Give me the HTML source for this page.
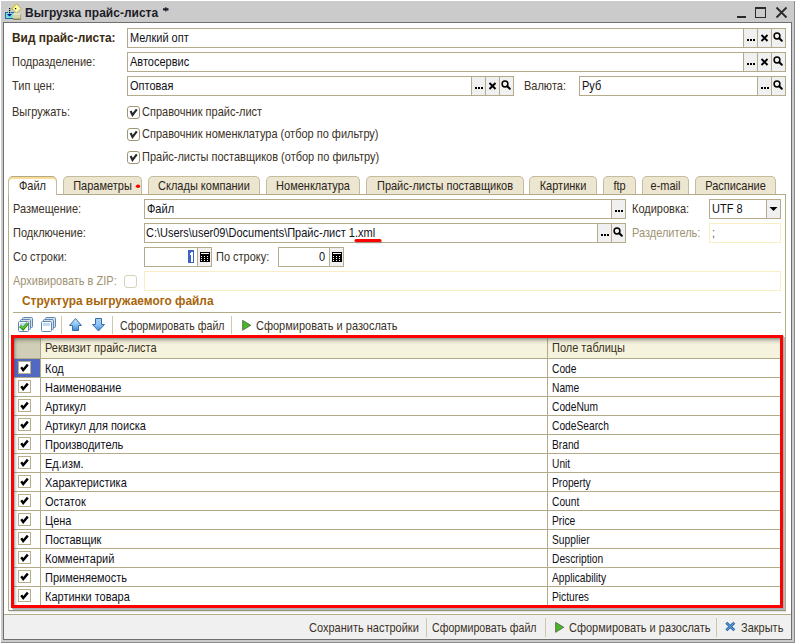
<!DOCTYPE html><html><head><meta charset="utf-8"><style>
html,body{margin:0;padding:0;background:#fff;width:795px;height:643px;overflow:hidden;position:relative}
.a{position:absolute;box-sizing:border-box}
.t{position:absolute;font-family:"Liberation Sans",sans-serif;line-height:14px;white-space:pre}
</style></head><body>
<div class="a" style="left:1px;top:1px;width:793px;height:641px;background:#cbcbcb;"></div>
<div class="a" style="left:794px;top:1px;width:1px;height:642px;background:#8c8c8c;"></div>
<div class="a" style="left:1px;top:642px;width:794px;height:1px;background:#8c8c8c;"></div>
<div class="a" style="left:3px;top:22px;width:789px;height:618px;background:#fff;border:1px solid #6e6e6e;box-sizing:border-box;"></div>
<div class="t" style="left:25px;top:6px;color:#1c1c28;font-size:12px;font-weight:bold;transform:scale(1,1.12);transform-origin:0 10px;">Выгрузка прайс-листа</div>
<svg class="a" style="left:162px;top:6px" width="8" height="7"><path d="M3.8,1.2L3.8,5.4M1.2,2.6L6.4,4M6.4,2.6L1.2,4" stroke="#1c1c28" stroke-width="1.3"/></svg>
<div class="a" style="left:737px;top:16px;width:9px;height:2px;background:#2a2a2a;"></div>
<div class="a" style="left:755px;top:7px;width:11px;height:11px;border:1px solid #2a2a2a;box-sizing:border-box;border-top-width:2px;"></div>
<svg class="a" style="left:774px;top:5px" width="15" height="15"><path d="M2.5,2.5L12.5,12.5M12.5,2.5L2.5,12.5" stroke="#2a2a2a" stroke-width="1.8"/></svg>
<svg class="a" style="left:0px;top:0px" width="24" height="22">
<rect x="5.5" y="12.5" width="8" height="6" fill="#78dcd8" stroke="#2a64a8" stroke-width="1"/>
<rect x="8" y="12" width="3" height="1.2" fill="#78dcd8"/>
<path d="M7,14L12,14L9.5,16.6Z" fill="#00108a"/>
<rect x="9" y="8" width="1.2" height="1.2" fill="#000"/><rect x="9" y="10" width="1.2" height="1.2" fill="#000"/><rect x="9" y="12" width="1.2" height="1.2" fill="#000"/><rect x="12" y="8" width="1.2" height="1.2" fill="#000"/>
<path d="M16.5,3.8L21,8.5L16.5,13.2L12,8.5Z" fill="#ffffa8" stroke="#9a9a40" stroke-width="0.8"/>
<path d="M12,8.5L16.5,3.8" stroke="#d8d000" stroke-width="1"/>
<rect x="15" y="8" width="1.2" height="1.2" fill="#000"/>
<rect x="13" y="13.5" width="8" height="6" fill="#d8d4a8"/>
<rect x="13" y="13.5" width="8" height="1" fill="#f4f2d0"/>
<rect x="13" y="18.6" width="8" height="1.2" fill="#7c7440"/>
<rect x="20.2" y="14" width="0.9" height="5.6" fill="#a8a070"/>
</svg>
<div class="t" style="left:12px;top:31px;color:#3a2a10;font-size:11.9px;font-weight:bold;transform:scale(1,1.06);transform-origin:0 10px;">Вид прайс-листа:</div>
<div class="a" style="left:127px;top:28px;width:659px;height:20px;background:#fff;border:1px solid #b3ab8b;box-sizing:border-box;"></div>
<div class="a" style="left:743px;top:28px;width:1px;height:20px;background:#b3ab8b;"></div>
<div class="a" style="left:744px;top:29px;width:13px;height:18px;background:#f0f0f0;"></div>
<div class="a" style="left:747px;top:39px;width:2px;height:2px;background:#000;"></div>
<div class="a" style="left:750px;top:39px;width:2px;height:2px;background:#000;"></div>
<div class="a" style="left:753px;top:39px;width:2px;height:2px;background:#000;"></div>
<div class="a" style="left:757px;top:28px;width:1px;height:20px;background:#b3ab8b;"></div>
<div class="a" style="left:758px;top:29px;width:13px;height:18px;background:#f0f0f0;"></div>
<svg class="a" style="left:758px;top:29px" width="13" height="18"><path d="M3.5,6.0L9.5,12.0M9.5,6.0L3.5,12.0" stroke="#000" stroke-width="1.9"/></svg>
<div class="a" style="left:771px;top:28px;width:1px;height:20px;background:#b3ab8b;"></div>
<div class="a" style="left:772px;top:29px;width:13px;height:18px;background:#f0f0f0;"></div>
<svg class="a" style="left:772px;top:29px" width="13" height="18"><circle cx="5.0" cy="7.0" r="2.9" fill="none" stroke="#000" stroke-width="1.5"/><path d="M7.3,9.3L9.8,11.8" stroke="#000" stroke-width="2" stroke-linecap="round"/></svg>
<div class="t" style="left:130px;top:31px;color:#101018;font-size:11px;font-weight:normal;transform:scale(1,1.12);transform-origin:0 10px;">Мелкий опт</div>
<div class="t" style="left:12px;top:55px;color:#3a3226;font-size:11px;font-weight:normal;transform:scale(1,1.12);transform-origin:0 10px;">Подразделение:</div>
<div class="a" style="left:127px;top:52px;width:659px;height:20px;background:#fff;border:1px solid #b3ab8b;box-sizing:border-box;"></div>
<div class="a" style="left:743px;top:52px;width:1px;height:20px;background:#b3ab8b;"></div>
<div class="a" style="left:744px;top:53px;width:13px;height:18px;background:#f0f0f0;"></div>
<div class="a" style="left:747px;top:63px;width:2px;height:2px;background:#000;"></div>
<div class="a" style="left:750px;top:63px;width:2px;height:2px;background:#000;"></div>
<div class="a" style="left:753px;top:63px;width:2px;height:2px;background:#000;"></div>
<div class="a" style="left:757px;top:52px;width:1px;height:20px;background:#b3ab8b;"></div>
<div class="a" style="left:758px;top:53px;width:13px;height:18px;background:#f0f0f0;"></div>
<svg class="a" style="left:758px;top:53px" width="13" height="18"><path d="M3.5,6.0L9.5,12.0M9.5,6.0L3.5,12.0" stroke="#000" stroke-width="1.9"/></svg>
<div class="a" style="left:771px;top:52px;width:1px;height:20px;background:#b3ab8b;"></div>
<div class="a" style="left:772px;top:53px;width:13px;height:18px;background:#f0f0f0;"></div>
<svg class="a" style="left:772px;top:53px" width="13" height="18"><circle cx="5.0" cy="7.0" r="2.9" fill="none" stroke="#000" stroke-width="1.5"/><path d="M7.3,9.3L9.8,11.8" stroke="#000" stroke-width="2" stroke-linecap="round"/></svg>
<div class="t" style="left:130px;top:55px;color:#101018;font-size:11px;font-weight:normal;transform:scale(1,1.12);transform-origin:0 10px;">Автосервис</div>
<div class="t" style="left:12px;top:79px;color:#3a3226;font-size:11px;font-weight:normal;transform:scale(1,1.12);transform-origin:0 10px;">Тип цен:</div>
<div class="a" style="left:127px;top:76px;width:387px;height:20px;background:#fff;border:1px solid #b3ab8b;box-sizing:border-box;"></div>
<div class="a" style="left:471px;top:76px;width:1px;height:20px;background:#b3ab8b;"></div>
<div class="a" style="left:472px;top:77px;width:13px;height:18px;background:#f0f0f0;"></div>
<div class="a" style="left:475px;top:87px;width:2px;height:2px;background:#000;"></div>
<div class="a" style="left:478px;top:87px;width:2px;height:2px;background:#000;"></div>
<div class="a" style="left:481px;top:87px;width:2px;height:2px;background:#000;"></div>
<div class="a" style="left:485px;top:76px;width:1px;height:20px;background:#b3ab8b;"></div>
<div class="a" style="left:486px;top:77px;width:13px;height:18px;background:#f0f0f0;"></div>
<svg class="a" style="left:486px;top:77px" width="13" height="18"><path d="M3.5,6.0L9.5,12.0M9.5,6.0L3.5,12.0" stroke="#000" stroke-width="1.9"/></svg>
<div class="a" style="left:499px;top:76px;width:1px;height:20px;background:#b3ab8b;"></div>
<div class="a" style="left:500px;top:77px;width:13px;height:18px;background:#f0f0f0;"></div>
<svg class="a" style="left:500px;top:77px" width="13" height="18"><circle cx="5.0" cy="7.0" r="2.9" fill="none" stroke="#000" stroke-width="1.5"/><path d="M7.3,9.3L9.8,11.8" stroke="#000" stroke-width="2" stroke-linecap="round"/></svg>
<div class="t" style="left:130px;top:79px;color:#101018;font-size:11px;font-weight:normal;transform:scale(1,1.12);transform-origin:0 10px;">Оптовая</div>
<div class="t" style="left:524px;top:79px;color:#3a3226;font-size:11px;font-weight:normal;transform:scale(1,1.12);transform-origin:0 10px;">Валюта:</div>
<div class="a" style="left:579px;top:76px;width:207px;height:20px;background:#fff;border:1px solid #b3ab8b;box-sizing:border-box;"></div>
<div class="a" style="left:757px;top:76px;width:1px;height:20px;background:#b3ab8b;"></div>
<div class="a" style="left:758px;top:77px;width:13px;height:18px;background:#f0f0f0;"></div>
<div class="a" style="left:761px;top:87px;width:2px;height:2px;background:#000;"></div>
<div class="a" style="left:764px;top:87px;width:2px;height:2px;background:#000;"></div>
<div class="a" style="left:767px;top:87px;width:2px;height:2px;background:#000;"></div>
<div class="a" style="left:771px;top:76px;width:1px;height:20px;background:#b3ab8b;"></div>
<div class="a" style="left:772px;top:77px;width:13px;height:18px;background:#f0f0f0;"></div>
<svg class="a" style="left:772px;top:77px" width="13" height="18"><circle cx="5.0" cy="7.0" r="2.9" fill="none" stroke="#000" stroke-width="1.5"/><path d="M7.3,9.3L9.8,11.8" stroke="#000" stroke-width="2" stroke-linecap="round"/></svg>
<div class="t" style="left:582px;top:79px;color:#101018;font-size:11px;font-weight:normal;transform:scale(1,1.12);transform-origin:0 10px;">Руб</div>
<div class="t" style="left:12px;top:105px;color:#3a3226;font-size:11px;font-weight:normal;transform:scale(1,1.12);transform-origin:0 10px;">Выгружать:</div>
<div class="a" style="left:127px;top:106px;width:13px;height:13px;background:#fff;border:1px solid #9f9775;box-sizing:border-box;border-radius:3px;"></div>
<svg class="a" style="left:127px;top:106px" width="13" height="13"><path d="M3.6,5L5.5,9L9.8,3.3" fill="none" stroke="#262626" stroke-width="2.1" stroke-linejoin="miter"/></svg>
<div class="t" style="left:142px;top:105px;color:#3a3226;font-size:11px;font-weight:normal;transform:scale(1,1.12);transform-origin:0 10px;">Справочник прайс-лист</div>
<div class="a" style="left:127px;top:128px;width:13px;height:13px;background:#fff;border:1px solid #9f9775;box-sizing:border-box;border-radius:3px;"></div>
<svg class="a" style="left:127px;top:128px" width="13" height="13"><path d="M3.6,5L5.5,9L9.8,3.3" fill="none" stroke="#262626" stroke-width="2.1" stroke-linejoin="miter"/></svg>
<div class="t" style="left:142px;top:127px;color:#3a3226;font-size:11px;font-weight:normal;transform:scale(1,1.12);transform-origin:0 10px;">Справочник номенклатура (отбор по фильтру)</div>
<div class="a" style="left:127px;top:151px;width:13px;height:13px;background:#fff;border:1px solid #9f9775;box-sizing:border-box;border-radius:3px;"></div>
<svg class="a" style="left:127px;top:151px" width="13" height="13"><path d="M3.6,5L5.5,9L9.8,3.3" fill="none" stroke="#262626" stroke-width="2.1" stroke-linejoin="miter"/></svg>
<div class="t" style="left:142px;top:150px;color:#3a3226;font-size:11px;font-weight:normal;transform:scale(1,1.12);transform-origin:0 10px;">Прайс-листы поставщиков (отбор по фильтру)</div>
<div class="a" style="left:8px;top:194px;width:778px;height:417px;background:#fff;border:1px solid #b3aa88;box-sizing:border-box;"></div>
<div class="a" style="left:8px;top:176px;width:49px;height:19px;background:#fff;border:1px solid #c4bc9c;border-bottom:none;border-radius:5px 5px 0 0;border-top-color:#b3a980;box-shadow:inset 0 2px 0 #fbdb98;"></div>
<div class="t" style="left:8px;top:179px;width:49px;text-align:center;color:#2a2418;font-size:11px;transform:scaleY(1.12);transform-origin:0 10px">Файл</div>
<div class="a" style="left:63px;top:176px;width:79px;height:18px;background:#ece6d1;border:1px solid #c4bc9c;border-bottom:none;border-radius:5px 5px 0 0;"></div>
<div class="t" style="left:63px;top:179px;width:79px;text-align:center;color:#2a2418;font-size:11px;transform:scaleY(1.12);transform-origin:0 10px">Параметры</div>
<div class="a" style="left:148px;top:176px;width:112px;height:18px;background:#ece6d1;border:1px solid #c4bc9c;border-bottom:none;border-radius:5px 5px 0 0;"></div>
<div class="t" style="left:148px;top:179px;width:112px;text-align:center;color:#2a2418;font-size:11px;transform:scaleY(1.12);transform-origin:0 10px">Склады компании</div>
<div class="a" style="left:266px;top:176px;width:94px;height:18px;background:#ece6d1;border:1px solid #c4bc9c;border-bottom:none;border-radius:5px 5px 0 0;"></div>
<div class="t" style="left:266px;top:179px;width:94px;text-align:center;color:#2a2418;font-size:11px;transform:scaleY(1.12);transform-origin:0 10px">Номенклатура</div>
<div class="a" style="left:366px;top:176px;width:158px;height:18px;background:#ece6d1;border:1px solid #c4bc9c;border-bottom:none;border-radius:5px 5px 0 0;"></div>
<div class="t" style="left:366px;top:179px;width:158px;text-align:center;color:#2a2418;font-size:11px;transform:scaleY(1.12);transform-origin:0 10px">Прайс-листы поставщиков</div>
<div class="a" style="left:529px;top:176px;width:68px;height:18px;background:#ece6d1;border:1px solid #c4bc9c;border-bottom:none;border-radius:5px 5px 0 0;"></div>
<div class="t" style="left:529px;top:179px;width:68px;text-align:center;color:#2a2418;font-size:11px;transform:scaleY(1.12);transform-origin:0 10px">Картинки</div>
<div class="a" style="left:603px;top:176px;width:33px;height:18px;background:#ece6d1;border:1px solid #c4bc9c;border-bottom:none;border-radius:5px 5px 0 0;"></div>
<div class="t" style="left:603px;top:179px;width:33px;text-align:center;color:#2a2418;font-size:11px;transform:scaleY(1.12);transform-origin:0 10px">ftp</div>
<div class="a" style="left:642px;top:176px;width:47px;height:18px;background:#ece6d1;border:1px solid #c4bc9c;border-bottom:none;border-radius:5px 5px 0 0;"></div>
<div class="t" style="left:642px;top:179px;width:47px;text-align:center;color:#2a2418;font-size:11px;transform:scaleY(1.12);transform-origin:0 10px">e-mail</div>
<div class="a" style="left:695px;top:176px;width:81px;height:18px;background:#ece6d1;border:1px solid #c4bc9c;border-bottom:none;border-radius:5px 5px 0 0;"></div>
<div class="t" style="left:695px;top:179px;width:81px;text-align:center;color:#2a2418;font-size:11px;transform:scaleY(1.12);transform-origin:0 10px">Расписание</div>
<svg class="a" style="left:134px;top:183px" width="8" height="7"><ellipse cx="4" cy="3.3" rx="2.2" ry="1.8" fill="#f00"/></svg>
<div class="t" style="left:13px;top:202px;color:#3a3226;font-size:11px;font-weight:normal;transform:scale(1,1.12);transform-origin:0 10px;">Размещение:</div>
<div class="a" style="left:144px;top:199px;width:482px;height:20px;background:#fff;border:1px solid #b3ab8b;box-sizing:border-box;"></div>
<div class="a" style="left:611px;top:199px;width:1px;height:20px;background:#b3ab8b;"></div>
<div class="a" style="left:612px;top:200px;width:13px;height:18px;background:#f0f0f0;"></div>
<div class="a" style="left:615px;top:210px;width:2px;height:2px;background:#000;"></div>
<div class="a" style="left:618px;top:210px;width:2px;height:2px;background:#000;"></div>
<div class="a" style="left:621px;top:210px;width:2px;height:2px;background:#000;"></div>
<div class="t" style="left:147px;top:202px;color:#101018;font-size:11px;font-weight:normal;transform:scale(1,1.12);transform-origin:0 10px;">Файл</div>
<div class="t" style="left:632px;top:202px;color:#3a3226;font-size:11px;font-weight:normal;transform:scale(1,1.12);transform-origin:0 10px;">Кодировка:</div>
<div class="a" style="left:709px;top:199px;width:72px;height:20px;background:#fff;border:1px solid #b3ab8b;box-sizing:border-box;"></div>
<div class="a" style="left:766px;top:199px;width:1px;height:20px;background:#b3ab8b;"></div>
<div class="a" style="left:767px;top:200px;width:13px;height:18px;background:#f0f0f0;"></div>
<svg class="a" style="left:767px;top:200px" width="13" height="18"><path d="M2.5,7.0L10.5,7.0L6.5,11.0Z" fill="#000"/></svg>
<div class="t" style="left:712px;top:202px;color:#101018;font-size:11px;font-weight:normal;transform:scale(1,1.12);transform-origin:0 10px;">UTF 8</div>
<div class="t" style="left:13px;top:226px;color:#3a3226;font-size:11px;font-weight:normal;transform:scale(1,1.12);transform-origin:0 10px;">Подключение:</div>
<div class="a" style="left:144px;top:223px;width:482px;height:20px;background:#fff;border:1px solid #b3ab8b;box-sizing:border-box;"></div>
<div class="a" style="left:597px;top:223px;width:1px;height:20px;background:#b3ab8b;"></div>
<div class="a" style="left:598px;top:224px;width:13px;height:18px;background:#f0f0f0;"></div>
<div class="a" style="left:601px;top:234px;width:2px;height:2px;background:#000;"></div>
<div class="a" style="left:604px;top:234px;width:2px;height:2px;background:#000;"></div>
<div class="a" style="left:607px;top:234px;width:2px;height:2px;background:#000;"></div>
<div class="a" style="left:611px;top:223px;width:1px;height:20px;background:#b3ab8b;"></div>
<div class="a" style="left:612px;top:224px;width:13px;height:18px;background:#f0f0f0;"></div>
<svg class="a" style="left:612px;top:224px" width="13" height="18"><circle cx="5.0" cy="7.0" r="2.9" fill="none" stroke="#000" stroke-width="1.5"/><path d="M7.3,9.3L9.8,11.8" stroke="#000" stroke-width="2" stroke-linecap="round"/></svg>
<div class="t" style="left:146px;top:226px;color:#101018;font-size:11px;font-weight:normal;transform:scale(1,1.12);transform-origin:0 10px;">C:\Users\user09\Documents\Прайс-лист 1.xml</div>
<div class="t" style="left:632px;top:226px;color:#9e9272;font-size:11px;font-weight:normal;transform:scale(1,1.12);transform-origin:0 10px;">Разделитель:</div>
<div class="a" style="left:709px;top:223px;width:72px;height:20px;background:#fff;border:1px solid #f8efc4;box-sizing:border-box;"></div>
<div class="t" style="left:712px;top:226px;color:#555;font-size:11px;font-weight:normal;transform:scale(1,1.12);transform-origin:0 10px;">;</div>
<svg class="a" style="left:353px;top:237px" width="30" height="7"><path d="M4,5L28,5" stroke="rgba(0,0,0,0.13)" stroke-width="3" stroke-linecap="round"/><path d="M3,3.5L27,3.5" stroke="#f00" stroke-width="3" stroke-linecap="round"/></svg>
<div class="t" style="left:13px;top:250px;color:#3a3226;font-size:11px;font-weight:normal;transform:scale(1,1.12);transform-origin:0 10px;">Со строки:</div>
<div class="a" style="left:144px;top:247px;width:68px;height:20px;background:#fff;border:1px solid #b3ab8b;box-sizing:border-box;"></div>
<div class="a" style="left:197px;top:247px;width:1px;height:20px;background:#b3ab8b;"></div>
<div class="a" style="left:198px;top:248px;width:13px;height:18px;background:#f0f0f0;"></div>
<svg class="a" style="left:198px;top:248px" width="13" height="18"><rect x="2" y="4" width="10" height="10" fill="#000"/><rect x="3" y="5" width="8" height="1" fill="#fff"/><rect x="3" y="8" width="1" height="1" fill="#fff"/><rect x="3" y="10" width="1" height="1" fill="#fff"/><rect x="3" y="12" width="1" height="1" fill="#fff"/><rect x="6" y="8" width="1" height="1" fill="#fff"/><rect x="6" y="10" width="1" height="1" fill="#fff"/><rect x="6" y="12" width="1" height="1" fill="#fff"/><rect x="9" y="8" width="1" height="1" fill="#fff"/><rect x="9" y="10" width="1" height="1" fill="#fff"/><rect x="9" y="12" width="1" height="1" fill="#fff"/></svg>
<div class="a" style="left:188px;top:250px;width:6px;height:13px;background:#3d62c8;"></div>
<div class="a" style="left:191px;top:252px;width:1.6px;height:10px;background:#fff;"></div>
<div class="a" style="left:189.6px;top:253px;width:1.6px;height:1.6px;background:#fff;"></div>
<div class="t" style="left:216px;top:250px;color:#3a3226;font-size:11px;font-weight:normal;transform:scale(1,1.12);transform-origin:0 10px;">По строку:</div>
<div class="a" style="left:278px;top:247px;width:66px;height:20px;background:#fff;border:1px solid #b3ab8b;box-sizing:border-box;"></div>
<div class="a" style="left:329px;top:247px;width:1px;height:20px;background:#b3ab8b;"></div>
<div class="a" style="left:330px;top:248px;width:13px;height:18px;background:#f0f0f0;"></div>
<svg class="a" style="left:330px;top:248px" width="13" height="18"><rect x="2" y="4" width="10" height="10" fill="#000"/><rect x="3" y="5" width="8" height="1" fill="#fff"/><rect x="3" y="8" width="1" height="1" fill="#fff"/><rect x="3" y="10" width="1" height="1" fill="#fff"/><rect x="3" y="12" width="1" height="1" fill="#fff"/><rect x="6" y="8" width="1" height="1" fill="#fff"/><rect x="6" y="10" width="1" height="1" fill="#fff"/><rect x="6" y="12" width="1" height="1" fill="#fff"/><rect x="9" y="8" width="1" height="1" fill="#fff"/><rect x="9" y="10" width="1" height="1" fill="#fff"/><rect x="9" y="12" width="1" height="1" fill="#fff"/></svg>
<div class="t" style="left:319px;top:250px;color:#101018;font-size:11px;font-weight:normal;transform:scale(1,1.12);transform-origin:0 10px;">0</div>
<div class="t" style="left:13px;top:274px;color:#9e9272;font-size:11px;font-weight:normal;transform:scale(1,1.12);transform-origin:0 10px;">Архивировать в ZIP:</div>
<div class="a" style="left:124px;top:275px;width:13px;height:13px;background:#fff;border:1px solid #d8d2bc;box-sizing:border-box;border-radius:3px;"></div>
<div class="a" style="left:144px;top:271px;width:637px;height:20px;background:#fff;border:1px solid #f8efc4;box-sizing:border-box;"></div>
<div class="t" style="left:22px;top:294px;color:#a86408;font-size:11.9px;font-weight:bold;">Структура выгружаемого файла</div>
<div class="a" style="left:13px;top:312px;width:768px;height:1px;background:#b3aa88;"></div>
<div class="a" style="left:61px;top:316px;width:1px;height:18px;background:#cfc8a8;"></div>
<div class="a" style="left:112px;top:316px;width:1px;height:18px;background:#cfc8a8;"></div>
<div class="a" style="left:231px;top:316px;width:1px;height:18px;background:#cfc8a8;"></div>
<div class="t" style="left:120px;top:319px;color:#3a3226;font-size:11px;font-weight:normal;transform:scale(0.965,1.12);transform-origin:0 10px;">Сформировать файл</div>
<svg class="a" style="left:240px;top:318px" width="14" height="14"><path d="M2.6,2.3L10.8,7.3L2.6,12.3Z" fill="#4cb42a" stroke="#3c5a34" stroke-width="0.7" stroke-linejoin="round"/></svg>
<div class="t" style="left:256px;top:319px;color:#3a3226;font-size:11px;font-weight:normal;transform:scale(1,1.12);transform-origin:0 10px;">Сформировать и разослать</div>
<svg class="a" style="left:17px;top:316px" width="18" height="18"><rect x="5.5" y="1.5" width="10" height="10" rx="1" fill="#dcdfe4" stroke="#5a88b8" stroke-width="1"/><rect x="3.5" y="3.5" width="10" height="10" rx="1" fill="#dcdfe4" stroke="#5a88b8" stroke-width="1"/><rect x="1.5" y="5.5" width="10" height="10" rx="1" fill="#fff" stroke="#5a88b8" stroke-width="1"/><rect x="3" y="7" width="7" height="3" fill="#c0d8f0"/><path d="M3,10L6,12.8L10.8,7.2" fill="none" stroke="#2a8a18" stroke-width="3"/><path d="M3.4,10L6,12.2L10.5,7.3" fill="none" stroke="#5cc83a" stroke-width="1.6"/></svg>
<svg class="a" style="left:40px;top:316px" width="18" height="18"><rect x="5.5" y="1.5" width="10" height="10" rx="1" fill="#dcdfe4" stroke="#5a88b8" stroke-width="1"/><rect x="3.5" y="3.5" width="10" height="10" rx="1" fill="#dcdfe4" stroke="#5a88b8" stroke-width="1"/><rect x="1.5" y="5.5" width="10" height="10" rx="1" fill="#fff" stroke="#5a88b8" stroke-width="1"/><rect x="3" y="7" width="7" height="3" fill="#c0d8f0"/></svg>
<svg class="a" style="left:68px;top:317px" width="16" height="16"><defs><linearGradient id="gu" x1="0" y1="0" x2="0" y2="1"><stop offset="0" stop-color="#d8ecfc"/><stop offset="0.5" stop-color="#8cc4f4"/><stop offset="1" stop-color="#3c88d8"/></linearGradient></defs><path d="M7.5,1.5L13.5,8.5L10.5,8.5L10.5,13.5L4.5,13.5L4.5,8.5L1.5,8.5Z" fill="url(#gu)" stroke="#3a6ea8" stroke-width="1" stroke-linejoin="round"/></svg>
<svg class="a" style="left:91px;top:317px" width="16" height="16"><defs><linearGradient id="gd" x1="0" y1="0" x2="0" y2="1"><stop offset="0" stop-color="#a8d0f4"/><stop offset="0.5" stop-color="#8cc4f4"/><stop offset="1" stop-color="#3c88d8"/></linearGradient></defs><path d="M4.5,1.5L10.5,1.5L10.5,7.5L13.5,7.5L7.5,14L1.5,7.5L4.5,7.5Z" fill="url(#gd)" stroke="#3a6ea8" stroke-width="1" stroke-linejoin="round"/></svg>
<div class="a" style="left:11px;top:335px;width:772px;height:273px;background:#fff;border:3px solid #ff0000;box-sizing:border-box;box-shadow:1px 1px 0 #a8acac,2px 2px 0 #babcc0;"></div>
<div class="a" style="left:14px;top:338px;width:766px;height:20px;background:#f5f3de;"></div>
<div class="a" style="left:14px;top:338px;width:26px;height:20px;background:#d0ceb6;"></div>
<div class="a" style="left:14px;top:358px;width:766px;height:1px;background:#b3aa88;"></div>
<div class="a" style="left:40px;top:338px;width:1px;height:267px;background:#b3aa88;"></div>
<div class="a" style="left:547px;top:338px;width:1px;height:267px;background:#b3aa88;"></div>
<div class="t" style="left:45px;top:341px;color:#3a3020;font-size:11px;font-weight:normal;transform:scale(1,1.12);transform-origin:0 10px;">Реквизит прайс-листа</div>
<div class="t" style="left:552px;top:341px;color:#3a3020;font-size:11px;font-weight:normal;transform:scale(1,1.12);transform-origin:0 10px;">Поле таблицы</div>
<div class="a" style="left:14px;top:359px;width:26px;height:18px;background:#5269c1;"></div>
<div class="a" style="left:14px;top:377px;width:766px;height:1px;background:#b3aa88;"></div>
<div class="a" style="left:18px;top:361px;width:13px;height:13px;background:#fff;border:1px solid #b8ae88;box-sizing:border-box;"></div>
<svg class="a" style="left:18px;top:361px" width="13" height="13"><path d="M3.2,6.2L5.2,9L9.8,3.6" fill="none" stroke="#000" stroke-width="2.4"/></svg>
<div class="t" style="left:45px;top:362px;color:#101018;font-size:11px;font-weight:normal;transform:scale(1,1.12);transform-origin:0 10px;">Код</div>
<div class="t" style="left:552px;top:362px;color:#101018;font-size:11px;font-weight:normal;transform:scale(0.93,1.12);transform-origin:0 10px;">Code</div>
<div class="a" style="left:14px;top:396px;width:766px;height:1px;background:#b3aa88;"></div>
<div class="a" style="left:18px;top:380px;width:13px;height:13px;background:#fff;border:1px solid #b8ae88;box-sizing:border-box;"></div>
<svg class="a" style="left:18px;top:380px" width="13" height="13"><path d="M3.2,6.2L5.2,9L9.8,3.6" fill="none" stroke="#000" stroke-width="2.4"/></svg>
<div class="t" style="left:45px;top:381px;color:#101018;font-size:11px;font-weight:normal;transform:scale(1,1.12);transform-origin:0 10px;">Наименование</div>
<div class="t" style="left:552px;top:381px;color:#101018;font-size:11px;font-weight:normal;transform:scale(0.93,1.12);transform-origin:0 10px;">Name</div>
<div class="a" style="left:14px;top:415px;width:766px;height:1px;background:#b3aa88;"></div>
<div class="a" style="left:18px;top:399px;width:13px;height:13px;background:#fff;border:1px solid #b8ae88;box-sizing:border-box;"></div>
<svg class="a" style="left:18px;top:399px" width="13" height="13"><path d="M3.2,6.2L5.2,9L9.8,3.6" fill="none" stroke="#000" stroke-width="2.4"/></svg>
<div class="t" style="left:45px;top:400px;color:#101018;font-size:11px;font-weight:normal;transform:scale(1,1.12);transform-origin:0 10px;">Артикул</div>
<div class="t" style="left:552px;top:400px;color:#101018;font-size:11px;font-weight:normal;transform:scale(0.93,1.12);transform-origin:0 10px;">CodeNum</div>
<div class="a" style="left:14px;top:434px;width:766px;height:1px;background:#b3aa88;"></div>
<div class="a" style="left:18px;top:418px;width:13px;height:13px;background:#fff;border:1px solid #b8ae88;box-sizing:border-box;"></div>
<svg class="a" style="left:18px;top:418px" width="13" height="13"><path d="M3.2,6.2L5.2,9L9.8,3.6" fill="none" stroke="#000" stroke-width="2.4"/></svg>
<div class="t" style="left:45px;top:419px;color:#101018;font-size:11px;font-weight:normal;transform:scale(1,1.12);transform-origin:0 10px;">Артикул для поиска</div>
<div class="t" style="left:552px;top:419px;color:#101018;font-size:11px;font-weight:normal;transform:scale(0.93,1.12);transform-origin:0 10px;">CodeSearch</div>
<div class="a" style="left:14px;top:453px;width:766px;height:1px;background:#b3aa88;"></div>
<div class="a" style="left:18px;top:437px;width:13px;height:13px;background:#fff;border:1px solid #b8ae88;box-sizing:border-box;"></div>
<svg class="a" style="left:18px;top:437px" width="13" height="13"><path d="M3.2,6.2L5.2,9L9.8,3.6" fill="none" stroke="#000" stroke-width="2.4"/></svg>
<div class="t" style="left:45px;top:438px;color:#101018;font-size:11px;font-weight:normal;transform:scale(1,1.12);transform-origin:0 10px;">Производитель</div>
<div class="t" style="left:552px;top:438px;color:#101018;font-size:11px;font-weight:normal;transform:scale(0.93,1.12);transform-origin:0 10px;">Brand</div>
<div class="a" style="left:14px;top:472px;width:766px;height:1px;background:#b3aa88;"></div>
<div class="a" style="left:18px;top:456px;width:13px;height:13px;background:#fff;border:1px solid #b8ae88;box-sizing:border-box;"></div>
<svg class="a" style="left:18px;top:456px" width="13" height="13"><path d="M3.2,6.2L5.2,9L9.8,3.6" fill="none" stroke="#000" stroke-width="2.4"/></svg>
<div class="t" style="left:45px;top:457px;color:#101018;font-size:11px;font-weight:normal;transform:scale(1,1.12);transform-origin:0 10px;">Ед.изм.</div>
<div class="t" style="left:552px;top:457px;color:#101018;font-size:11px;font-weight:normal;transform:scale(0.93,1.12);transform-origin:0 10px;">Unit</div>
<div class="a" style="left:14px;top:491px;width:766px;height:1px;background:#b3aa88;"></div>
<div class="a" style="left:18px;top:475px;width:13px;height:13px;background:#fff;border:1px solid #b8ae88;box-sizing:border-box;"></div>
<svg class="a" style="left:18px;top:475px" width="13" height="13"><path d="M3.2,6.2L5.2,9L9.8,3.6" fill="none" stroke="#000" stroke-width="2.4"/></svg>
<div class="t" style="left:45px;top:476px;color:#101018;font-size:11px;font-weight:normal;transform:scale(1,1.12);transform-origin:0 10px;">Характеристика</div>
<div class="t" style="left:552px;top:476px;color:#101018;font-size:11px;font-weight:normal;transform:scale(0.93,1.12);transform-origin:0 10px;">Property</div>
<div class="a" style="left:14px;top:510px;width:766px;height:1px;background:#b3aa88;"></div>
<div class="a" style="left:18px;top:494px;width:13px;height:13px;background:#fff;border:1px solid #b8ae88;box-sizing:border-box;"></div>
<svg class="a" style="left:18px;top:494px" width="13" height="13"><path d="M3.2,6.2L5.2,9L9.8,3.6" fill="none" stroke="#000" stroke-width="2.4"/></svg>
<div class="t" style="left:45px;top:495px;color:#101018;font-size:11px;font-weight:normal;transform:scale(1,1.12);transform-origin:0 10px;">Остаток</div>
<div class="t" style="left:552px;top:495px;color:#101018;font-size:11px;font-weight:normal;transform:scale(0.93,1.12);transform-origin:0 10px;">Count</div>
<div class="a" style="left:14px;top:529px;width:766px;height:1px;background:#b3aa88;"></div>
<div class="a" style="left:18px;top:513px;width:13px;height:13px;background:#fff;border:1px solid #b8ae88;box-sizing:border-box;"></div>
<svg class="a" style="left:18px;top:513px" width="13" height="13"><path d="M3.2,6.2L5.2,9L9.8,3.6" fill="none" stroke="#000" stroke-width="2.4"/></svg>
<div class="t" style="left:45px;top:514px;color:#101018;font-size:11px;font-weight:normal;transform:scale(1,1.12);transform-origin:0 10px;">Цена</div>
<div class="t" style="left:552px;top:514px;color:#101018;font-size:11px;font-weight:normal;transform:scale(0.93,1.12);transform-origin:0 10px;">Price</div>
<div class="a" style="left:14px;top:548px;width:766px;height:1px;background:#b3aa88;"></div>
<div class="a" style="left:18px;top:532px;width:13px;height:13px;background:#fff;border:1px solid #b8ae88;box-sizing:border-box;"></div>
<svg class="a" style="left:18px;top:532px" width="13" height="13"><path d="M3.2,6.2L5.2,9L9.8,3.6" fill="none" stroke="#000" stroke-width="2.4"/></svg>
<div class="t" style="left:45px;top:533px;color:#101018;font-size:11px;font-weight:normal;transform:scale(1,1.12);transform-origin:0 10px;">Поставщик</div>
<div class="t" style="left:552px;top:533px;color:#101018;font-size:11px;font-weight:normal;transform:scale(0.93,1.12);transform-origin:0 10px;">Supplier</div>
<div class="a" style="left:14px;top:567px;width:766px;height:1px;background:#b3aa88;"></div>
<div class="a" style="left:18px;top:551px;width:13px;height:13px;background:#fff;border:1px solid #b8ae88;box-sizing:border-box;"></div>
<svg class="a" style="left:18px;top:551px" width="13" height="13"><path d="M3.2,6.2L5.2,9L9.8,3.6" fill="none" stroke="#000" stroke-width="2.4"/></svg>
<div class="t" style="left:45px;top:552px;color:#101018;font-size:11px;font-weight:normal;transform:scale(1,1.12);transform-origin:0 10px;">Комментарий</div>
<div class="t" style="left:552px;top:552px;color:#101018;font-size:11px;font-weight:normal;transform:scale(0.93,1.12);transform-origin:0 10px;">Description</div>
<div class="a" style="left:14px;top:586px;width:766px;height:1px;background:#b3aa88;"></div>
<div class="a" style="left:18px;top:570px;width:13px;height:13px;background:#fff;border:1px solid #b8ae88;box-sizing:border-box;"></div>
<svg class="a" style="left:18px;top:570px" width="13" height="13"><path d="M3.2,6.2L5.2,9L9.8,3.6" fill="none" stroke="#000" stroke-width="2.4"/></svg>
<div class="t" style="left:45px;top:571px;color:#101018;font-size:11px;font-weight:normal;transform:scale(1,1.12);transform-origin:0 10px;">Применяемость</div>
<div class="t" style="left:552px;top:571px;color:#101018;font-size:11px;font-weight:normal;transform:scale(0.93,1.12);transform-origin:0 10px;">Applicability</div>
<div class="a" style="left:18px;top:589px;width:13px;height:13px;background:#fff;border:1px solid #b8ae88;box-sizing:border-box;"></div>
<svg class="a" style="left:18px;top:589px" width="13" height="13"><path d="M3.2,6.2L5.2,9L9.8,3.6" fill="none" stroke="#000" stroke-width="2.4"/></svg>
<div class="t" style="left:45px;top:590px;color:#101018;font-size:11px;font-weight:normal;transform:scale(1,1.12);transform-origin:0 10px;">Картинки товара</div>
<div class="t" style="left:552px;top:590px;color:#101018;font-size:11px;font-weight:normal;transform:scale(0.93,1.12);transform-origin:0 10px;">Pictures</div>
<div class="a" style="left:14px;top:338px;width:4px;height:267px;background:linear-gradient(to right,rgba(60,95,95,0.42) 0px,rgba(60,95,95,0.42) 1px,rgba(60,80,100,0.2) 1px,rgba(60,80,100,0.2) 2px,rgba(60,80,110,0.09) 2px,rgba(60,80,110,0.09) 3px,rgba(60,80,110,0.03) 3px);"></div>
<div class="a" style="left:14px;top:338px;width:766px;height:6px;background:linear-gradient(to bottom,rgba(50,95,90,0.5) 0px,rgba(50,95,90,0.5) 1px,rgba(60,70,70,0.34) 1px,rgba(60,70,70,0.34) 2px,rgba(60,70,70,0.22) 2px,rgba(60,70,70,0.22) 3px,rgba(70,70,60,0.13) 3px,rgba(70,70,60,0.13) 4px,rgba(70,70,60,0.08) 4px,rgba(70,70,60,0.08) 5px,rgba(70,70,60,0.04) 5px,rgba(70,70,60,0.04) 6px);"></div>
<div class="a" style="left:9px;top:610px;width:777px;height:1px;background:#948f72;"></div>
<div class="a" style="left:9px;top:611px;width:777px;height:1px;background:#e8e8ea;"></div>
<div class="a" style="left:9px;top:612px;width:777px;height:1px;background:#f2f2f3;"></div>
<div class="a" style="left:4px;top:614px;width:787px;height:1px;background:#b3aa88;"></div>
<div class="a" style="left:4px;top:615px;width:787px;height:24px;background:#f0f0f0;"></div>
<div class="t" style="left:309px;top:621px;color:#3a3226;font-size:11px;font-weight:normal;transform:scale(1,1.12);transform-origin:0 10px;">Сохранить настройки</div>
<div class="a" style="left:426px;top:618px;width:1px;height:19px;background:#cfc8a8;"></div>
<div class="t" style="left:432px;top:621px;color:#3a3226;font-size:11px;font-weight:normal;transform:scale(0.965,1.12);transform-origin:0 10px;">Сформировать файл</div>
<div class="a" style="left:545px;top:618px;width:1px;height:19px;background:#cfc8a8;"></div>
<svg class="a" style="left:553px;top:620px" width="14" height="14"><path d="M2.6,2.3L10.8,7.3L2.6,12.3Z" fill="#4cb42a" stroke="#3c5a34" stroke-width="0.7" stroke-linejoin="round"/></svg>
<div class="t" style="left:569px;top:621px;color:#3a3226;font-size:11px;font-weight:normal;transform:scale(1,1.12);transform-origin:0 10px;">Сформировать и разослать</div>
<div class="a" style="left:716px;top:618px;width:1px;height:19px;background:#cfc8a8;"></div>
<svg class="a" style="left:723px;top:619px" width="14" height="14"><path d="M3.3,3.8L11.3,11.3M11.3,3.8L3.3,11.3" stroke="#2e6aa8" stroke-width="2.8"/><path d="M3.8,4.2L10.8,10.8M10.8,4.2L3.8,10.8" stroke="#6aa6e0" stroke-width="1"/></svg>
<div class="t" style="left:741px;top:621px;color:#3a3226;font-size:11px;font-weight:normal;transform:scale(1,1.12);transform-origin:0 10px;">Закрыть</div>
</body></html>
